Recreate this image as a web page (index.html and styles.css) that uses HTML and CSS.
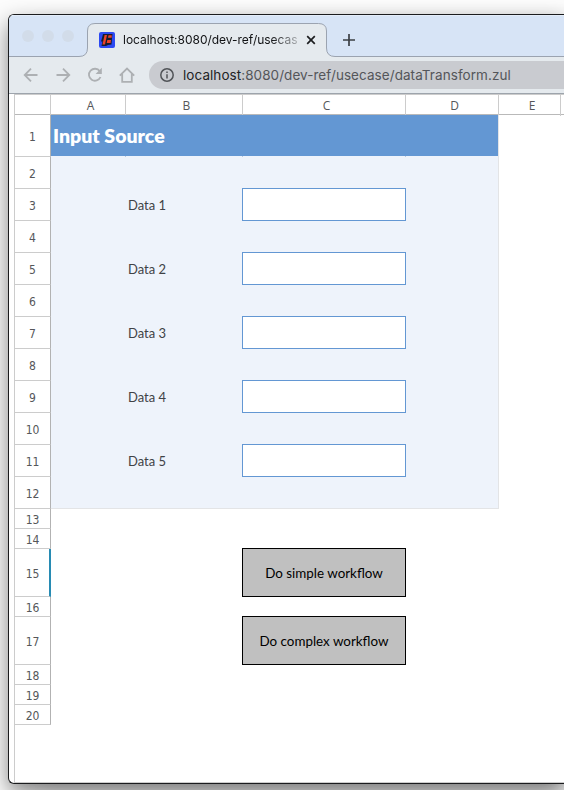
FILE: index.html
```html
<!DOCTYPE html>
<html lang="en">
<head>
<meta charset="utf-8">
<title>localhost:8080/dev-ref/usecase/dataTransform.zul</title>
<link rel="stylesheet" href="styles.css">
</head>
<body>
<div class="window">
  <header class="tabstrip">
    <svg class="tab-shape" width="555" height="42" viewBox="9 15 555 42">
      <path d="M8 56.500H79Q87.500 56.500 87.500 48V31Q87.500 23.500 95 23.500H318.500Q326.500 23.500 326.500 31V48Q326.500 56.500 335 56.500H566V58H8Z" fill="#e5eaee" stroke="#9ba3b0"/>
    </svg>
    <div class="lights"><i></i><i></i><i></i></div>
    <div class="tab">
      <svg class="favicon" width="16" height="16" viewBox="0 0 16 16">
        <rect width="16" height="16" rx="2" fill="#2c49f2"/>
        <path d="M4 2H13.500L13 6.500L12.500 12.500L9 13L7 14H2.500L3.500 9.500H2L3 6Z" fill="#171b2e"/>
        <path d="M5.600 3H8L6 12.500H3.500ZM9.500 3.200H12.700V5.700H9ZM8.300 8H12L11.600 11H7.700Z" fill="#ec4229"/>
      </svg>
      <span class="tab-title">localhost:8080/dev-ref/usecas</span>
      <svg class="close" width="10" height="10" viewBox="0 0 10 10"><path d="M1.200 1.200L8.800 8.800M8.800 1.200L1.200 8.800" stroke="#1d1e20" stroke-width="1.700"/></svg>
    </div>
    <svg class="plus" width="12" height="12" viewBox="0 0 12 12"><path d="M6 0V12M0 6H12" stroke="#3b3f44" stroke-width="1.700"/></svg>
  </header>
  <nav class="toolbar">
    <svg width="16" height="16" viewBox="0 0 16 16"><path d="M14.500 8H2M8 1.700L1.700 8L8 14.300"/></svg>
    <svg width="16" height="16" viewBox="0 0 16 16"><path d="M1.500 8H14M8 1.700L14.300 8L8 14.300"/></svg>
    <svg width="16" height="16" viewBox="0 0 16 16"><path d="M13.500 10A6 6 0 1 1 12.800 4.200"/><path class="solid" d="M14.800 0.800V7H8.600Z"/></svg>
    <svg width="16" height="16" viewBox="0 0 16 16"><path d="M0.800 8.700L8 1.500L15.200 8.700M3.200 7V14.800H12.800V7"/></svg>
    <div class="address">
      <svg class="info" width="14" height="14" viewBox="0 0 14 14"><circle cx="7" cy="7" r="6.200"/><path d="M7 6.200V10.400M7 3.500V5"/></svg>
      <span class="url"><b>localhost</b>:8080/dev-ref/usecase/dataTransform.zul</span>
    </div>
  </nav>
  <main class="sheet">
    <div class="columns"><span></span><span>A</span><span>B</span><span>C</span><span>D</span><span>E</span><span></span></div>
    <div class="grid">
      <ol class="rows">
        <li>1</li><li>2</li><li>3</li><li>4</li><li>5</li><li>6</li><li>7</li><li>8</li><li>9</li><li>10</li><li>11</li><li>12</li><li>13</li><li>14</li><li class="active">15</li><li>16</li><li>17</li><li>18</li><li>19</li><li>20</li>
      </ol>
      <div class="cells">
        <section class="panel">
          <h1>Input Source</h1>
          <div class="ticks"><i></i><i></i><i></i></div>
          <div class="field"><span>Data 1</span><div class="input"></div></div>
          <div class="field"><span>Data 2</span><div class="input"></div></div>
          <div class="field"><span>Data 3</span><div class="input"></div></div>
          <div class="field"><span>Data 4</span><div class="input"></div></div>
          <div class="field"><span>Data 5</span><div class="input"></div></div>
        </section>
        <div class="actions">
          <div class="action">Do simple workflow</div>
          <div class="action">Do complex workflow</div>
        </div>
      </div>
    </div>
  </main>
</div>
</body>
</html>
```
FILE: styles.css
```css
* { box-sizing: border-box; }
body { margin: 0; width: 564px; height: 790px; overflow: hidden; background: #fcfcfc; padding: 14px 0 0 8px; }
.window { width: 556px; height: 770px; border: 1px solid #1b1c1e; border-right: 0; border-radius: 6px 0 0 6px; background: #fff; overflow: hidden; box-shadow: 0 9px 22px rgba(0,0,0,.48), 30px 9px 22px rgba(0,0,0,.1); }
svg { display: block; flex: none; }
.tabstrip { position: relative; height: 42px; display: flex; align-items: flex-start; background: #d7e4f6; border-top: 1px solid #e4edf9; }
.tab-shape { position: absolute; left: 0; top: -1px; }
.tabstrip > :not(.tab-shape) { position: relative; }
.lights { display: flex; gap: 8px; padding: 14px 0 0 13px; width: 78px; }
.lights i { width: 12px; height: 12px; border-radius: 50%; background: #d2dce9; }
.tab { display: flex; align-items: center; width: 240px; height: 34px; margin-top: 7px; padding-left: 12px; }
.tab-title { margin-left: 8px; width: 175px; overflow: hidden; white-space: nowrap; font: 12px/18px Inter, sans-serif; letter-spacing: -.02px; color: #101113; -webkit-mask-image: linear-gradient(90deg, #000 148px, rgba(0,0,0,.25) 175px); mask-image: linear-gradient(90deg, #000 148px, rgba(0,0,0,.25) 175px); }
.close { margin-left: 8px; }
.plus { margin: 18px 0 0 16px; }
.toolbar { display: flex; align-items: center; gap: 16px; height: 37px; padding-left: 14px; background: #e5eaee; border-bottom: 1px solid #9da4ac; }
.toolbar > svg { fill: none; stroke: #adb0b3; stroke-width: 1.8; }
.toolbar .solid { fill: #adb0b3; stroke: none; }
.address { display: flex; align-items: center; flex: 1; height: 28px; margin-left: -2px; padding-left: 11px; border-radius: 14px 0 0 14px; background: #c9cbd0; }
.info { fill: none; stroke: #505357; stroke-width: 1.5; }
.url { margin-left: 9px; white-space: nowrap; font: 13.500px/20px Inter, sans-serif; letter-spacing: .06px; color: #54565a; }
.url b { font-weight: 400; color: #222326; }
.sheet { height: 689px; margin-left: 5px; border: 1px solid #ccc; border-right: 0; }
.columns { display: grid; grid-template-columns: 36px 75px 117px 163px 93px 62px 1fr; height: 20px; border-bottom: 1px solid #b9b9b9; }
.columns span { border-right: 1px solid #ccc; text-align: center; font: 12px/21px "Open Sans", sans-serif; color: #55575a; padding-left: 5px; }
.columns span:last-child { border: 0; padding: 0; }
.grid { display: flex; }
.rows { list-style: none; margin: 0; padding: 0; width: 36px; display: grid; grid-template-rows: 42px repeat(11, 32px) 20px 20px 48px 20px 48px 20px 20px 20px; }
.rows li { display: flex; align-items: center; justify-content: center; border-right: 1px solid #b2b2b2; border-bottom: 1px solid #ccc; font: 12px/14px "DejaVu Sans Condensed", "DejaVu Sans", sans-serif; font-stretch: condensed; color: #55575a; padding-top: 2px; }
.rows .active { border-right: 2px solid #278bb3; padding-left: 1px; }
.cells { width: 448px; font-family: Lato, sans-serif; }
.panel { height: 394px; background: #eef3fb; border: solid #e3e4e6; border-width: 0 1px 1px 0; }
.panel h1 { height: 41px; margin: 0; padding-left: 2px; background: #6397d3; color: #fff; font: 800 19.500px/41px Lato, sans-serif; white-space: nowrap; }
.ticks { display: grid; grid-template-columns: 75px 117px 163px; height: 1px; margin-bottom: 31px; }
.ticks i { border-right: 1px solid #b8c8df; }
.field { display: grid; grid-template-columns: 77px 114px 164px; grid-template-rows: 33px; height: 33px; margin-bottom: 31px; }
.field span { grid-column: 2; font-size: 13px; line-height: 34px; color: #404246; }
.input { grid-column: 3; border: 1px solid #6397d3; background: #fff; }
.actions { display: flex; flex-direction: column; gap: 19px; padding: 39px 0 0 191px; }
.action { width: 164px; height: 49px; border: 1px solid #000; background: #c0c0c0; color: #000; text-align: center; font-size: 13.400px; line-height: 48px; white-space: nowrap; }
```
